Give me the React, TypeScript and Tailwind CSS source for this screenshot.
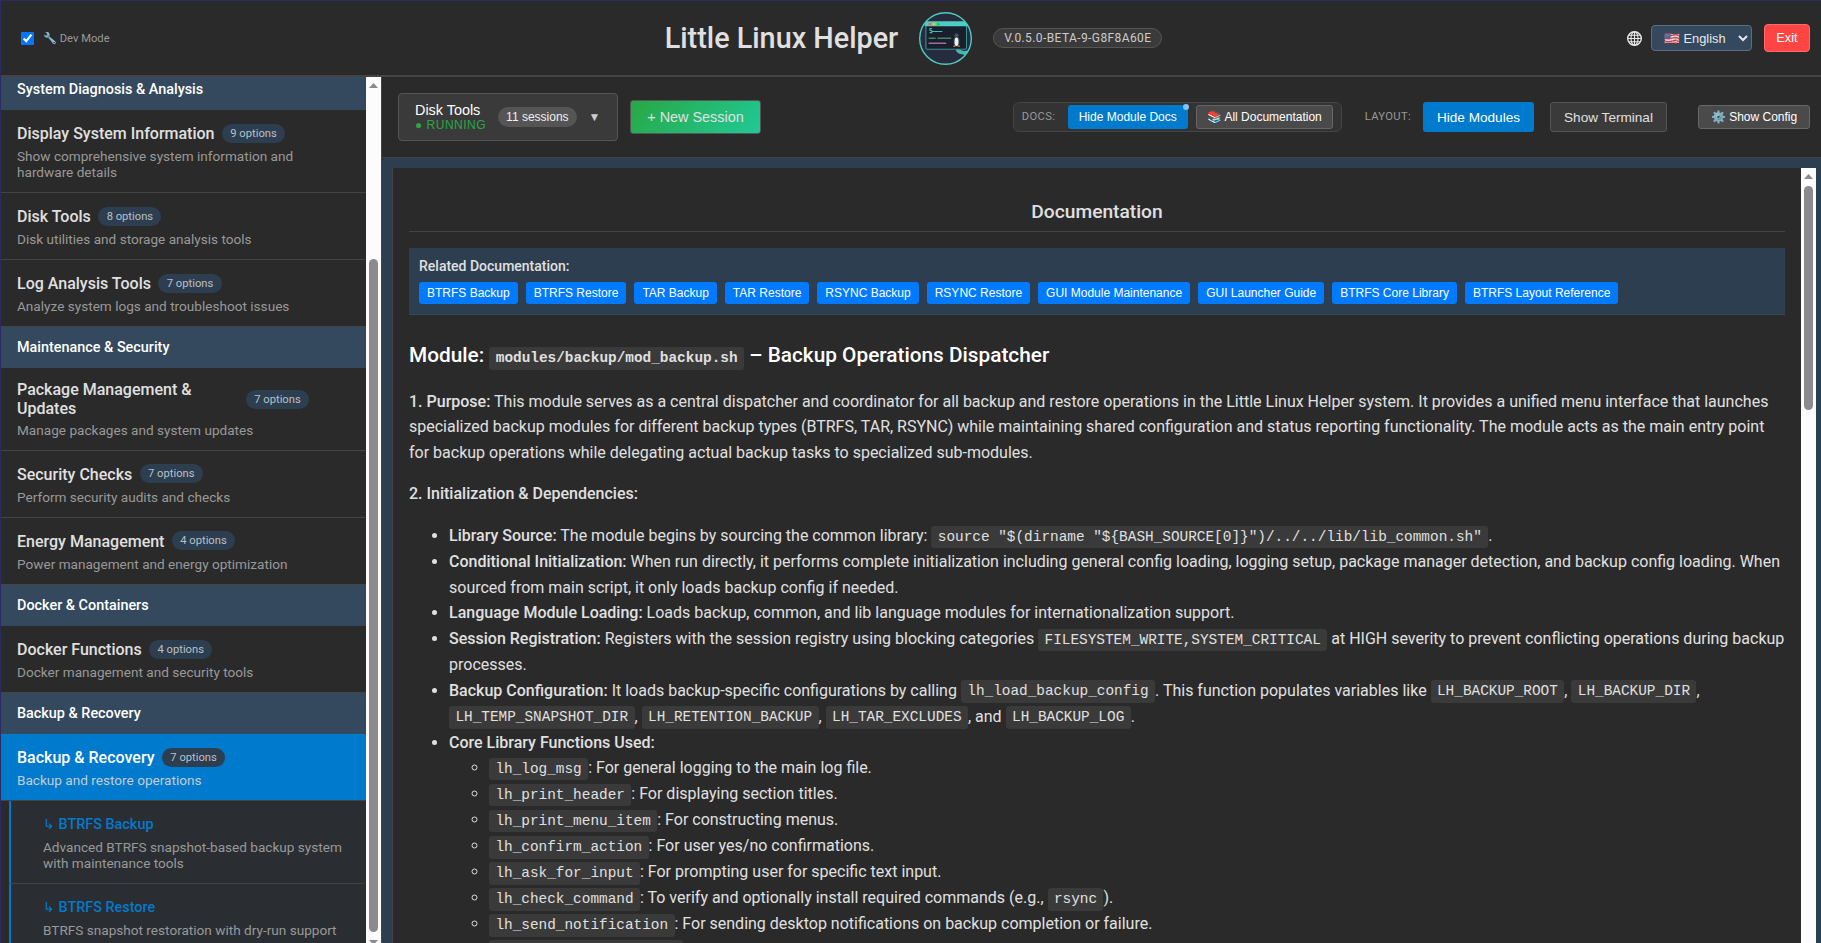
import { useState, type ReactNode } from "react";

interface ModuleEntry {
  name: string;
  options: number;
  desc: string;
  active?: boolean;
  children?: { name: string; desc: string }[];
}

interface Category {
  title: string;
  modules: ModuleEntry[];
}

const CATEGORIES: Category[] = [
  {
    title: "System Diagnosis & Analysis",
    modules: [
      { name: "Display System Information", options: 9, desc: "Show comprehensive system information and hardware details" },
      { name: "Disk Tools", options: 8, desc: "Disk utilities and storage analysis tools" },
      { name: "Log Analysis Tools", options: 7, desc: "Analyze system logs and troubleshoot issues" },
    ],
  },
  {
    title: "Maintenance & Security",
    modules: [
      { name: "Package Management & Updates", options: 7, desc: "Manage packages and system updates" },
      { name: "Security Checks", options: 7, desc: "Perform security audits and checks" },
      { name: "Energy Management", options: 4, desc: "Power management and energy optimization" },
    ],
  },
  {
    title: "Docker & Containers",
    modules: [{ name: "Docker Functions", options: 4, desc: "Docker management and security tools" }],
  },
  {
    title: "Backup & Recovery",
    modules: [
      {
        name: "Backup & Recovery",
        options: 7,
        desc: "Backup and restore operations",
        active: true,
        children: [
          { name: "BTRFS Backup", desc: "Advanced BTRFS snapshot-based backup system with maintenance tools" },
          { name: "BTRFS Restore", desc: "BTRFS snapshot restoration with dry-run support" },
        ],
      },
    ],
  },
];

const RELATED_DOCS = [
  "BTRFS Backup",
  "BTRFS Restore",
  "TAR Backup",
  "TAR Restore",
  "RSYNC Backup",
  "RSYNC Restore",
  "GUI Module Maintenance",
  "GUI Launcher Guide",
  "BTRFS Core Library",
  "BTRFS Layout Reference",
];

function Logo() {
  return (
    <svg width="53" height="53" viewBox="0 0 53 53" className="shrink-0">
      <defs>
        <clipPath id="logo-clip">
          <circle cx="26.5" cy="26.5" r="25.8" />
        </clipPath>
      </defs>
      <circle cx="26.5" cy="26.5" r="25.8" fill="#262b3d" />
      <g clipPath="url(#logo-clip)">
        <rect x="6.9" y="12" width="40.6" height="25.3" rx="1.5" fill="#1a1f2e" stroke="#3b8f92" strokeWidth="1.1" />
        <rect x="5.5" y="9.3" width="43.5" height="5" rx="0.8" fill="#4ecdc4" />
        <circle cx="10.8" cy="12.2" r="1.4" fill="#ff5f56" />
        <circle cx="15" cy="12.2" r="1.4" fill="#ffbd2e" />
        <circle cx="19.2" cy="12.2" r="1.4" fill="#27c93f" />
        <path d="M13 16.5h-2v2h1.8v2.2h-2.2M13 19.5h10.4" fill="none" stroke="#45b8b0" strokeWidth="1.2" />
        <path d="M9.6 26.2h7M18.5 26.2h13.7" stroke="#3f8560" strokeWidth="1.5" />
        <path d="M9.6 31.3h17.6" stroke="#a06c92" strokeWidth="1.5" />
        <ellipse cx="37.5" cy="23.8" rx="2.1" ry="2.5" fill="#4b5263" />
        <ellipse cx="37.5" cy="29.5" rx="3.1" ry="4.9" fill="#3a3f52" />
        <ellipse cx="37.5" cy="29.7" rx="2" ry="4.2" fill="#f1f3f6" />
        <path d="M34.4 34.2h2.2M38.6 34.2h2.2" stroke="#e8912d" strokeWidth="1.2" />
        <path d="M37 38c2.5-1.2 5 .4 7 .8s4.5-.6 7 .2l-3 5.5c-1.5-1.2-3-2.2-5-2.3S37.5 41.5 37 38z" fill="#4ecdc4" opacity="0.85" />
      </g>
      <circle cx="26.5" cy="26.5" r="25.8" fill="none" stroke="#4ecdc4" strokeWidth="1.4" />
    </svg>
  );
}

function Code({ children, bold }: { children: ReactNode; bold?: boolean }) {
  return (
    <code
      className={`rounded-[3px] bg-[#3a3a3a] px-[6.4px] py-[3.2px] font-['Liberation_Mono',monospace] text-[14.4px] text-[#e0e0e0] ${bold ? "font-bold" : ""}`}
    >
      {children}
    </code>
  );
}

function B({ children }: { children: ReactNode }) {
  return <strong className="font-medium">{children}</strong>;
}

function ModuleItem({ mod }: { mod: ModuleEntry }) {
  return (
    <>
      <div className={`border-b border-[#444] px-4 py-3 ${mod.active ? "bg-[#007acc]" : ""}`}>
        <div className="flex min-h-[22px] max-w-[292px] items-center gap-[7.5px]">
          <span className={`translate-y-px text-base leading-[18.75px] font-medium ${mod.active ? "text-white" : "text-[#e0e0e0]"}`}>
            {mod.name}
          </span>
          <span className="shrink-0 rounded-full bg-[#2c3e50] px-[8.3px] py-[3px] text-[11.2px] leading-[13px] text-[#b9c0c6]">
            {mod.options} options
          </span>
        </div>
        <p className={`mt-1 text-[13.6px] leading-4 ${mod.active ? "text-[#c6ccd0]" : "text-[#999]"}`}>{mod.desc}</p>
      </div>
      {mod.children?.map((c) => (
        <div key={c.name} className="ml-2 rounded-br-[4px] border-b border-l-2 border-b-[#444] border-l-[#007acc] bg-[#2a2e32] py-3 pr-4 pl-8">
          <div className="flex min-h-[22px] items-center pt-[2px] text-[14.4px] leading-[18px] font-medium text-[#007acc]">↳ {c.name}</div>
          <p className="mt-1 text-[13.6px] leading-4 text-[#999]">{c.desc}</p>
        </div>
      ))}
    </>
  );
}

function ScrollArrow({ down }: { down?: boolean }) {
  return (
    <svg width="9" height="5" viewBox="0 0 9 5" className="mx-auto block shrink-0">
      <path d={down ? "M0 0h9L4.5 5z" : "M4.5 0L9 5H0z"} fill="#8b8b8b" />
    </svg>
  );
}

export default function App() {
  const [devMode, setDevMode] = useState(true);

  return (
    <div className="flex h-[943px] w-[1821px] flex-col overflow-hidden border-t border-l border-[#2b2a63] bg-[#2a2a2a] font-[Roboto,sans-serif] text-[#e0e0e0]">
      <header className="flex h-[76px] shrink-0 items-center justify-between border-b-2 border-[#444] pr-[11px] pl-5">
        <label className="flex w-[516px] items-center pt-[2px] text-[11.2px] text-[#999]">
          <input type="checkbox" checked={devMode} onChange={(e) => setDevMode(e.target.checked)} className="mr-[9px] h-[13px] w-[13px]" />
          🔧 Dev Mode
        </label>
        <div className="flex items-center">
          <h1 className="mr-[21px] text-[28.8px] leading-none font-medium">Little Linux Helper</h1>
          <Logo />
          <span className="ml-[21px] w-[169px] rounded-full border border-[#555] bg-[#3a3a3a] text-center text-xs leading-[18px] tracking-[0.4px] text-[#ccc] uppercase">
            v.0.5.0-beta-9-g8f8a60e
          </span>
        </div>
        <div className="flex w-[520px] items-center justify-end font-['Liberation_Sans',sans-serif]">
          <svg width="15" height="15" viewBox="0 0 15 15" className="mr-[9px]" fill="none" stroke="#e8e8e8" strokeWidth="1.1">
            <circle cx="7.5" cy="7.5" r="6.8" strokeWidth="1.4" />
            <ellipse cx="7.5" cy="7.5" rx="3.5" ry="6.8" />
            <path d="M7.5 .5v14M.5 7.5h14M1.7 4.2h11.6M1.7 10.8h11.6" />
          </svg>
          <select className="mr-3 h-[26px] w-[101px] rounded-[4px] border border-[#5d6d7e] bg-[#34495e] px-2 text-[12.8px] text-[#e8e8e8]">
            <option>🇺🇸 English</option>
          </select>
          <button className="h-7 w-[46px] rounded-[4px] border border-[#ff6b6b] bg-[#ff4444] text-[12.8px] text-white">Exit</button>
        </div>
      </header>

      <div className="flex min-h-0 flex-1">
        <aside className="flex w-[381px] shrink-0 border-r border-[#444]">
          <div className="flex w-[365px] flex-col justify-start overflow-hidden">
            <nav className="-mt-2">
              {CATEGORIES.map((cat) => (
                <section key={cat.title}>
                  <h3 className="bg-[#34495e] px-4 py-3 text-[14.4px] leading-[17.2px] font-medium text-white">{cat.title}</h3>
                  {cat.modules.map((m) => (
                    <ModuleItem key={m.name} mod={m} />
                  ))}
                </section>
              ))}
            </nav>
          </div>
          <div className="flex w-[15px] flex-col bg-[#fcfcfc] pt-[6px]">
            <ScrollArrow />
            <div className="mx-auto mt-[171px] h-[673px] w-[9px] shrink-0 rounded-full bg-[#8b8b8b]" />
            <div className="mt-2">
              <ScrollArrow down />
            </div>
          </div>
        </aside>

        <main className="flex min-w-0 flex-1 flex-col">
          <div className="flex h-[81px] shrink-0 items-center border-b border-[#444] pr-[11px] pl-4 font-['Liberation_Sans',sans-serif]">
            <button className="mr-3 flex h-12 w-[220px] items-center rounded-[4px] border border-[#555] bg-[#3a3a3a] pl-4 text-left">
              <span className="mr-3 block">
                <span className="block text-[14.4px] leading-4 text-white">Disk Tools</span>
                <span className="block text-xs leading-[14px] tracking-[0.5px] text-[#28a745]">● RUNNING</span>
              </span>
              <span className="mr-3 rounded-full bg-[#555] px-2 text-xs leading-5 text-[#f0f0f0]">11 sessions</span>
              <span className="text-xs text-[#ccc]">▼</span>
            </button>
            <button className="h-[34px] w-[131px] rounded-[3px] border border-[#555] bg-linear-[135deg] from-[#28a745] to-[#20c997] pt-px text-[14.4px] text-[#e0e0e0]">
              + New Session
            </button>

            <div className="ml-auto flex h-[30px] w-[329px] items-center rounded-[6px] border border-[#444] bg-[#333] pr-2 pl-2">
              <span className="font-[Roboto,sans-serif] text-[11.2px] tracking-[0.4px] text-[#999]">DOCS:</span>
              <button className="relative mr-2 ml-auto h-6 w-[120px] rounded-[3px] bg-[#007acc] text-xs text-white">
                Hide Module Docs
                <span className="absolute -top-px -right-px h-[6px] w-[6px] rounded-full bg-[#7fc4ff]" />
              </button>
              <button className="h-6 w-[137px] rounded-[3px] border border-[#666] bg-[#4a4a4a] text-xs text-white">📚 All Documentation</button>
            </div>
            <span className="mr-3 ml-[23px] font-[Roboto,sans-serif] text-[11.2px] tracking-[0.35px] text-[#999]">LAYOUT:</span>
            <button className="mr-4 h-[30px] w-[111px] rounded-[3px] bg-[#007acc] pt-[2px] text-[13.6px] text-white">Hide Modules</button>
            <button className="mr-[31px] h-[30px] w-[117px] rounded-[3px] border border-[#555] bg-[#3a3a3a] pt-[2px] text-[13.6px] text-[#e0e0e0]">Show Terminal</button>
            <button className="h-6 w-28 rounded-[3px] border border-[#666] bg-[#4a4a4a] text-xs text-white">⚙️ Show Config</button>
          </div>

          <div className="flex min-h-0 flex-1 rounded-tl-[4px] bg-[#2c3e50] pt-[10px] pr-[5px] pl-[10px]">
            <div className="flex min-w-0 flex-1 border-l border-[#444] bg-[#2a2a2a]">
              <div className="min-w-0 flex-1 overflow-hidden pt-8 pr-4 pl-4">
                <h2 className="h-[32px] border-b border-[#444] text-center text-[19.2px] leading-[23px] font-medium">Documentation</h2>
                <div className="mt-4 border-b border-[#34495e] bg-[#2c3e50] p-[10px] pt-[9px]">
                  <div className="mb-[7px] text-sm leading-[18px] font-medium">Related Documentation:</div>
                  <div className="flex gap-2">
                    {RELATED_DOCS.map((d) => (
                      <button key={d} className="h-[22px] rounded-[3px] bg-[#007bff] px-2 font-['Liberation_Sans',sans-serif] text-xs text-white">
                        {d}
                      </button>
                    ))}
                  </div>
                </div>

                <div className="text-base leading-[1.6]">
                  <h2 className="mt-[24.4px] mb-4 text-[20.8px] font-medium text-white">
                    Module: <Code bold>modules/backup/mod_backup.sh</Code> – Backup Operations Dispatcher
                  </h2>
                  <p className="mb-4">
                    <B>1. Purpose:</B> This module serves as a central dispatcher and coordinator for all backup and restore operations in the Little Linux Helper system. It provides a unified menu interface that launches specialized backup modules for different backup types (BTRFS, TAR, RSYNC) while maintaining shared configuration and status reporting functionality. The module acts as the main entry point for backup operations while delegating actual backup tasks to specialized sub-modules.
                  </p>
                  <p className="mb-4">
                    <B>2. Initialization & Dependencies:</B>
                  </p>
                  <ul className="list-disc pl-10">
                    <li>
                      <B>Library Source:</B> The module begins by sourcing the common library: <Code>{'source "$(dirname "${BASH_SOURCE[0]}")/../../lib/lib_common.sh"'}</Code>.
                    </li>
                    <li>
                      <B>Conditional Initialization:</B> When run directly, it performs complete initialization including general config loading, logging setup, package manager detection, and backup config loading. When sourced from main script, it only loads backup config if needed.
                    </li>
                    <li>
                      <B>Language Module Loading:</B> Loads backup, common, and lib language modules for internationalization support.
                    </li>
                    <li>
                      <B>Session Registration:</B> Registers with the session registry using blocking categories <Code>FILESYSTEM_WRITE,SYSTEM_CRITICAL</Code> at HIGH severity to prevent conflicting operations during backup processes.
                    </li>
                    <li>
                      <B>Backup Configuration:</B> It loads backup-specific configurations by calling <Code>lh_load_backup_config</Code>. This function populates variables like <Code>LH_BACKUP_ROOT</Code>, <Code>LH_BACKUP_DIR</Code>, <Code>LH_TEMP_SNAPSHOT_DIR</Code>, <Code>LH_RETENTION_BACKUP</Code>, <Code>LH_TAR_EXCLUDES</Code>, and <Code>LH_BACKUP_LOG</Code>.
                    </li>
                    <li>
                      <B>Core Library Functions Used:</B>
                      <ul className="list-[circle] pl-10">
                        <li><Code>lh_log_msg</Code>: For general logging to the main log file.</li>
                        <li><Code>lh_print_header</Code>: For displaying section titles.</li>
                        <li><Code>lh_print_menu_item</Code>: For constructing menus.</li>
                        <li><Code>lh_confirm_action</Code>: For user yes/no confirmations.</li>
                        <li><Code>lh_ask_for_input</Code>: For prompting user for specific text input.</li>
                        <li><Code>lh_check_command</Code>: To verify and optionally install required commands (e.g., <Code>rsync</Code>).</li>
                        <li><Code>lh_send_notification</Code>: For sending desktop notifications on backup completion or failure.</li>
                        <li><Code>lh_load_backup_config</Code></li>
                      </ul>
                    </li>
                  </ul>
                </div>
              </div>
              <div className="flex w-[15px] shrink-0 flex-col bg-[#fcfcfc] pt-[6px]">
                <ScrollArrow />
                <div className="mx-auto mt-[7px] h-[224px] w-[9px] shrink-0 rounded-full bg-[#8b8b8b]" />
              </div>
            </div>
          </div>
        </main>
      </div>
    </div>
  );
}
